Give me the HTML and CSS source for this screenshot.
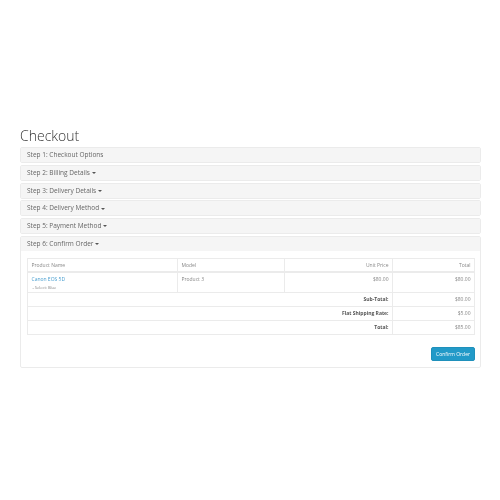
FILE: index.html
```html
<!DOCTYPE html>
<html lang="en">
<head>
    <meta charset="UTF-8">
    <title>Checkout</title>
    <link rel="stylesheet" href="styles.css">
</head>
<body>

<div class="container">
    <h1>Checkout</h1>

    <div class="panel"><div class="panel-heading">Step 1: Checkout Options</div></div>
    <div class="panel"><div class="panel-heading">Step 2: Billing Details <span class="caret"></span></div></div>
    <div class="panel"><div class="panel-heading">Step 3: Delivery Details <span class="caret"></span></div></div>
    <div class="panel"><div class="panel-heading">Step 4: Delivery Method <span class="caret"></span></div></div>
    <div class="panel"><div class="panel-heading">Step 5: Payment Method <span class="caret"></span></div></div>

    <div class="panel">
        <div class="panel-heading">Step 6: Confirm Order <span class="caret"></span></div>
        <div class="panel-body">
            <table class="order-table">
                <thead>
                    <tr>
                        <th class="col-name">Product Name</th>
                        <th class="col-model">Model</th>
                        <th class="col-price right">Unit Price</th>
                        <th class="right">Total</th>
                    </tr>
                </thead>
                <tbody>
                    <tr class="product-row">
                        <td><a href="#">Canon EOS 5D</a><br><small>&nbsp;- Select: Blue</small></td>
                        <td>Product 3</td>
                        <td class="right">$80.00</td>
                        <td class="right">$80.00</td>
                    </tr>
                    <tr>
                        <td colspan="3" class="right"><strong>Sub-Total:</strong></td>
                        <td class="right">$80.00</td>
                    </tr>
                    <tr>
                        <td colspan="3" class="right"><strong>Flat Shipping Rate:</strong></td>
                        <td class="right">$5.00</td>
                    </tr>
                    <tr>
                        <td colspan="3" class="right"><strong>Total:</strong></td>
                        <td class="right">$85.00</td>
                    </tr>
                </tbody>
            </table>
            <div class="buttons">
                <button type="button" class="btn-confirm">Confirm Order</button>
            </div>
        </div>
    </div>
</div>

</body>
</html>
```

FILE: styles.css
```css
body {
    font-family: "Open Sans", sans-serif;
    font-size: 5px;
    color: #888;
    background-color: #fff;
    margin: 0;
    padding: 0;
}
.container {
    padding: 126px 19px 0 20px;
    filter: blur(0.3px);
}
h1 {
    font-size: 14px;
    font-weight: 300;
    line-height: 20px;
    color: #333;
    margin: 0 0 1px;
}
.panel {
    border: 1px solid #ebebeb;
    border-radius: 2px;
    margin-bottom: 1.75px;
    background-color: #fff;
}
.panel-heading {
    background-color: #f5f5f5;
    font-size: 6.5px;
    line-height: 14px;
    padding: 0 6px;
    color: #666;
}
.caret {
    display: inline-block;
    vertical-align: middle;
    border-top: 2px solid #555;
    border-left: 2px solid transparent;
    border-right: 2px solid transparent;
}
.panel-body {
    padding: 7px 5px 6px 6px;
}
.order-table {
    width: 448px;
    border-collapse: collapse;
    table-layout: fixed;
}
.order-table th, .order-table td {
    box-sizing: border-box;
    border: 1px solid #ebebeb;
    padding: 0 3.5px;
    font-weight: 400;
    line-height: 13px;
    text-align: left;
    vertical-align: middle;
}
.col-name {
    width: 150px;
}
.col-model {
    width: 107px;
}
.col-price {
    width: 108px;
}
.order-table thead th {
    border-bottom-width: 2px;
    line-height: 12px;
}
.product-row td {
    vertical-align: top;
    padding-top: 2px;
    line-height: 8px;
    height: 21px;
}
.order-table strong {
    font-weight: 700;
    color: #555;
}
.order-table a {
    color: #4a9fd0;
    text-decoration: none;
}
.order-table small {
    display: inline-block;
    font-size: 4px;
    line-height: 6px;
}
.order-table th.right, .order-table td.right {
    text-align: right;
}
.buttons {
    display: flex;
    justify-content: flex-end;
    margin-top: 12px;
}
.btn-confirm {
    width: 44px;
    height: 14px;
    padding: 0;
    font-family: inherit;
    font-size: 5px;
    color: #fff;
    background-color: #229ac8;
    border: 1px solid #1f90bb;
    border-radius: 2px;
}
```
